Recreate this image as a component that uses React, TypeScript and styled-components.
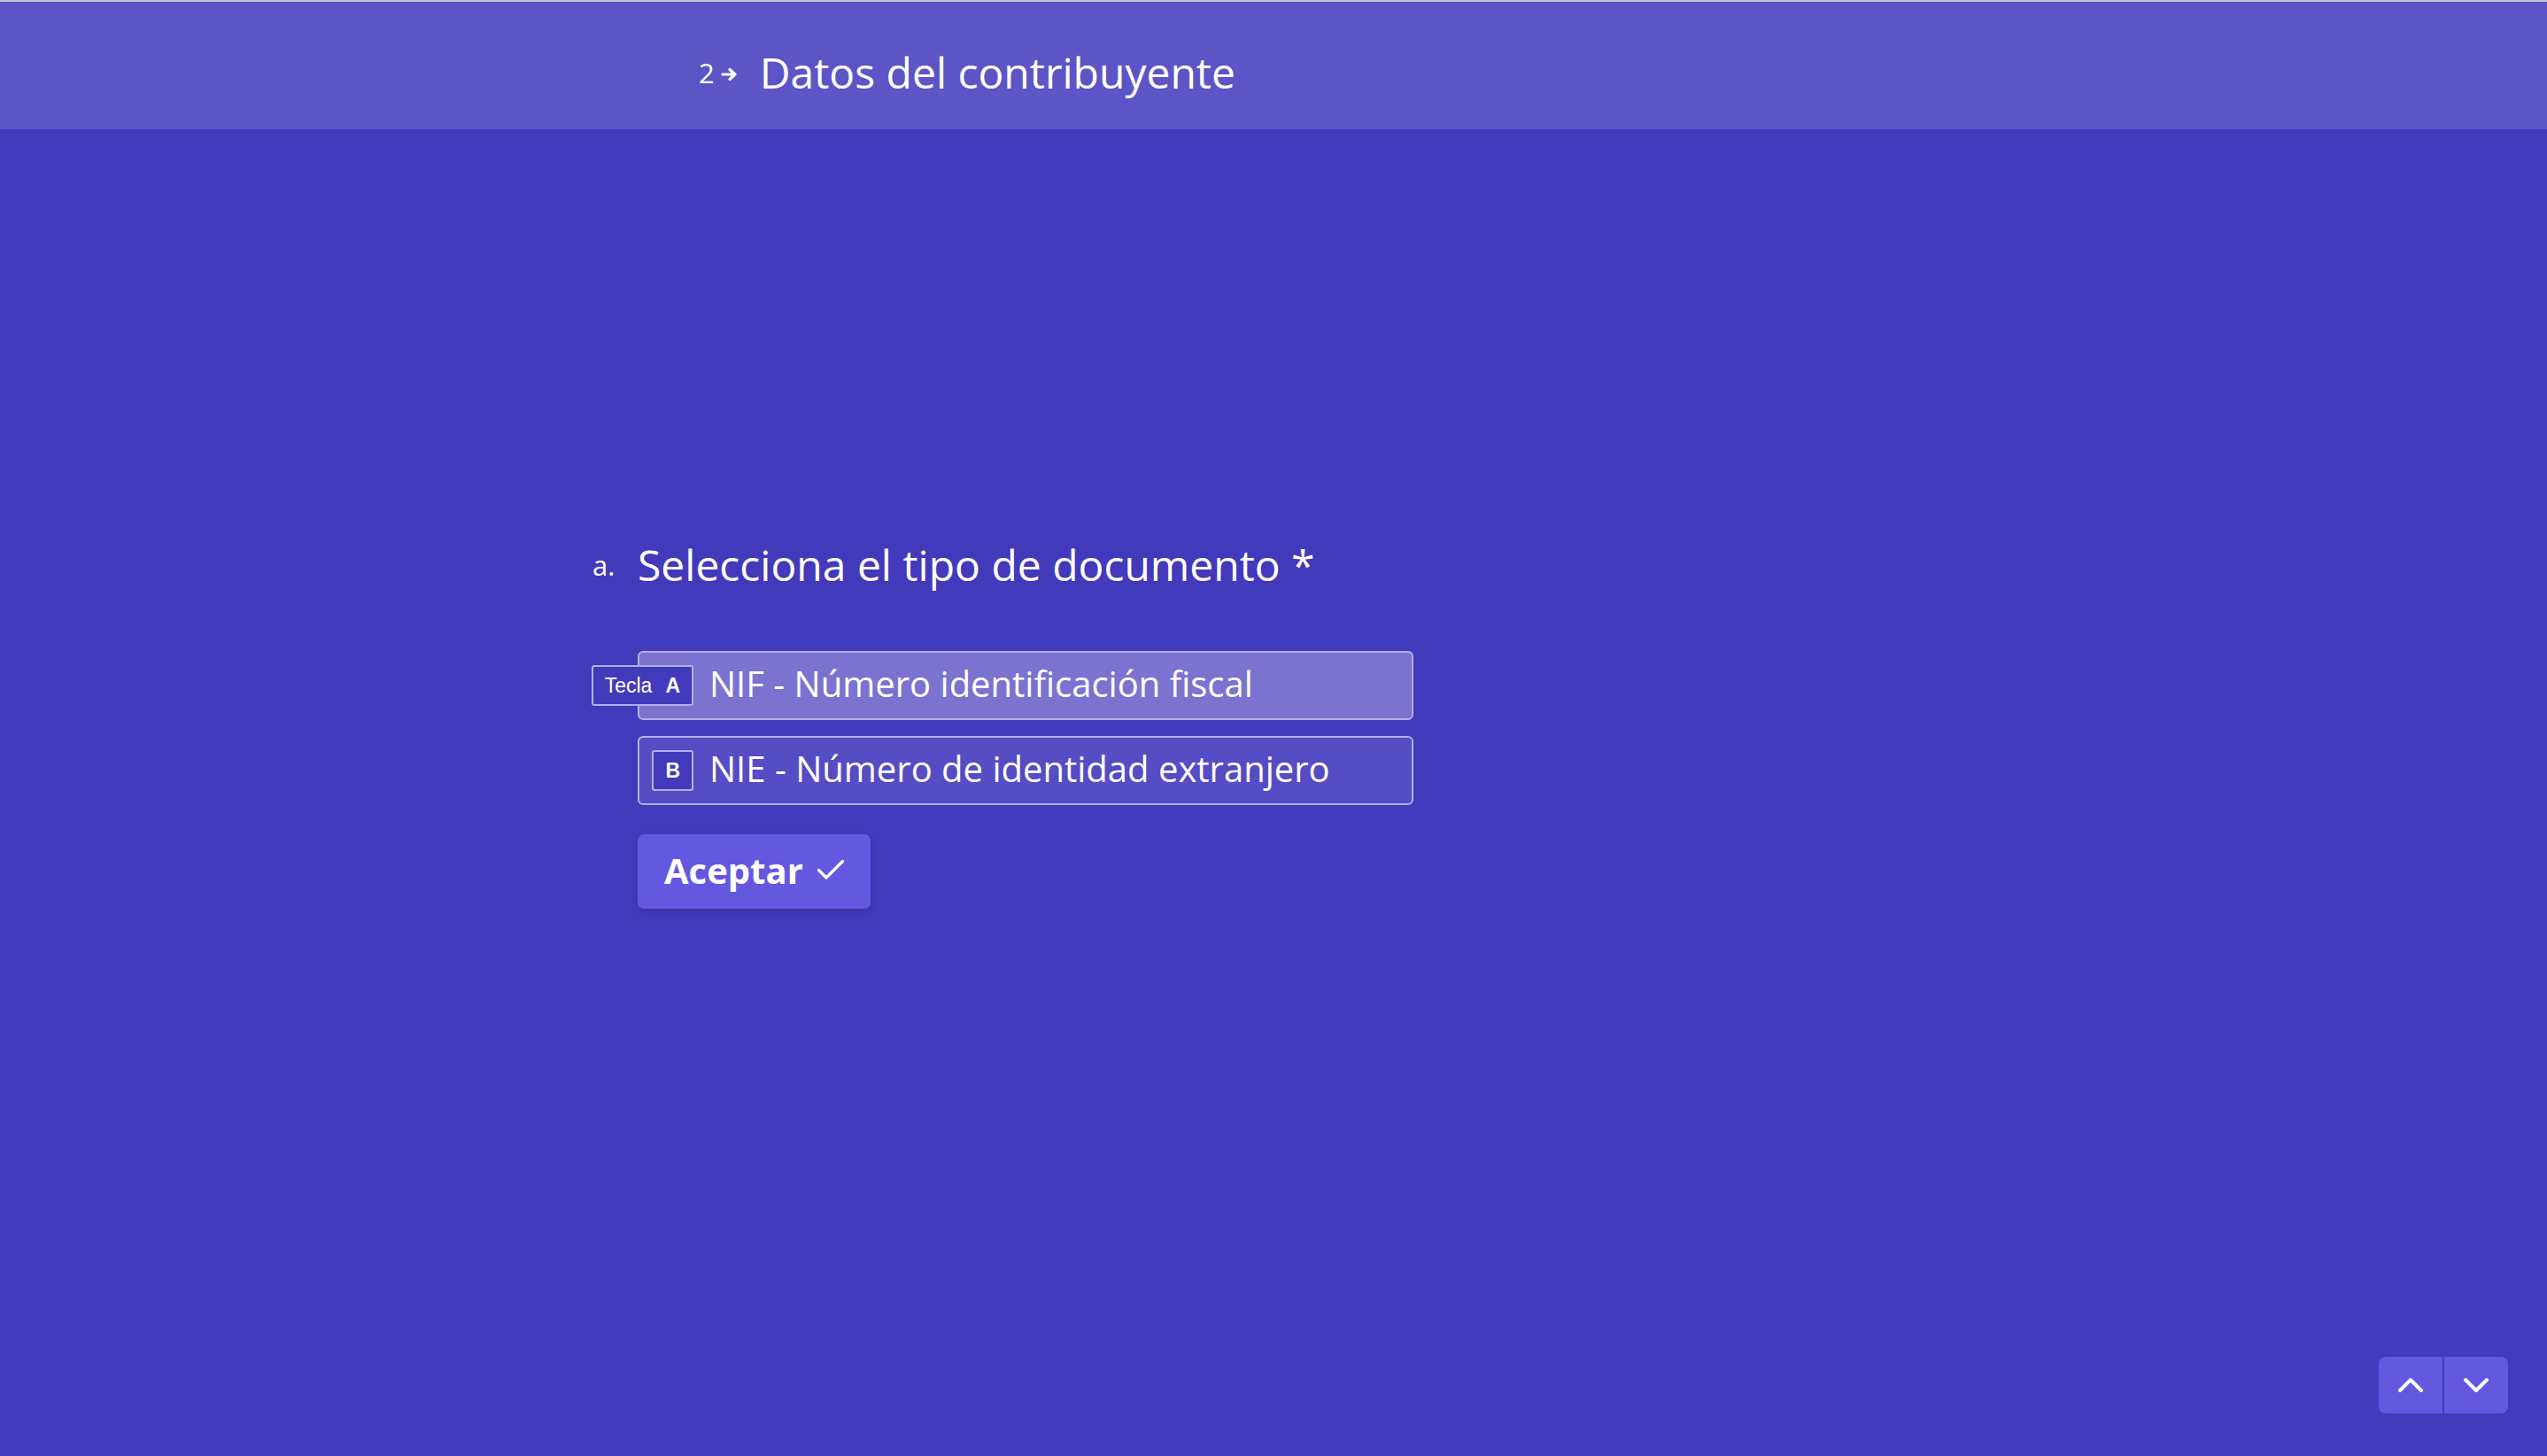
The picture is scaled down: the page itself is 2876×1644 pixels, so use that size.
import React from "react";
import styled, { createGlobalStyle } from "styled-components";

const GlobalStyle = createGlobalStyle`
  html, body {
    margin: 0;
    padding: 0;
    background: #4339bb;
    font-family: "Open Sans", "Noto Sans", sans-serif;
    color: #ffffff;
  }
`;

const Page = styled.div`
  min-height: 100vh;
  background: #4339bb;
  display: flex;
  flex-direction: column;
`;

const Header = styled.header`
  height: 146px;
  box-sizing: border-box;
  border-top: 2px solid #c9c8d6;
  background: #5d55c5;
  display: flex;
  align-items: center;
  padding-left: 789px;
  padding-top: 16px;
`;

const Step = styled.span`
  display: flex;
  align-items: center;
  font-size: 31px;
  margin-right: 24px;

  & svg {
    margin-left: 7px;
    margin-top: 3px;
  }
`;

const SectionTitle = styled.h1`
  margin: 0;
  font-size: 48px;
  font-weight: 400;
  line-height: 60px;
`;

const Main = styled.main`
  padding: 462px 0 0 720px;
`;

const Question = styled.div`
  display: flex;
  align-items: center;
  margin-left: -51px;
`;

const Number = styled.span`
  width: 51px;
  font-size: 31px;
`;

const QuestionText = styled.h2`
  margin: 0;
  font-size: 48px;
  font-weight: 400;
  line-height: 60px;
`;

const Options = styled.div`
  display: flex;
  flex-direction: column;
  gap: 18px;
  margin-top: 67px;
  width: 876px;
`;

const Option = styled.div<{ $active?: boolean }>`
  height: 78px;
  box-sizing: border-box;
  border: 2px solid #b4afe7;
  border-radius: 6px;
  background: ${(p) => (p.$active ? "#7b73cf" : "#564cc4")};
  display: flex;
  align-items: center;
  padding-left: 15px;
  gap: 18px;
`;

const KeySlot = styled.div`
  width: 46px;
  display: flex;
  justify-content: flex-end;
`;

const Key = styled.span`
  height: 46px;
  min-width: 46px;
  box-sizing: border-box;
  border: 2px solid #b4afe7;
  border-radius: 3px;
  background: #4339bb;
  display: flex;
  align-items: center;
  justify-content: center;
  gap: 15px;
  padding: 0 13px;
  font-family: "Liberation Sans", Arial, sans-serif;
  font-size: 23px;
  white-space: nowrap;
  flex-shrink: 0;

  & b {
    font-weight: 700;
  }
`;

const OptionLabel = styled.span`
  font-size: 40px;
  line-height: 1;
  padding-bottom: 4px;
`;

const SubmitButton = styled.button`
  margin-top: 33px;
  height: 84px;
  width: 263px;
  border: none;
  border-radius: 7px;
  background: #6558e0;
  color: #ffffff;
  font-family: "Open Sans", "Noto Sans", sans-serif;
  font-weight: 700;
  font-size: 40px;
  display: flex;
  align-items: center;
  gap: 15px;
  padding: 0 0 4px 30px;
  box-shadow: 0 3px 12px rgba(0, 0, 0, 0.12);
  cursor: pointer;
`;

const NavGroup = styled.div`
  position: fixed;
  right: 44px;
  bottom: 48px;
  display: flex;
  gap: 2px;
`;

const NavButton = styled.button<{ $side: "left" | "right" }>`
  width: 72px;
  height: 64px;
  border: none;
  background: #6558e0;
  display: flex;
  align-items: center;
  justify-content: center;
  border-radius: ${(p) => (p.$side === "left" ? "8px 0 0 8px" : "0 8px 8px 0")};
  cursor: pointer;
`;

const ArrowRight = () => (
  <svg width="20" height="16" viewBox="0 0 20 16" fill="none">
    <path d="M2 8h14M10 2.5l6 5.5-6 5.5" stroke="#fff" strokeWidth="3.2" strokeLinecap="round" strokeLinejoin="round" />
  </svg>
);

const Check = () => (
  <svg width="32" height="24" viewBox="0 0 32 24" fill="none">
    <path d="M2.5 12.5l8.5 8.5L29.5 2.5" stroke="#fff" strokeWidth="3.2" strokeLinecap="round" strokeLinejoin="round" />
  </svg>
);

const Chevron = ({ up }: { up?: boolean }) => (
  <svg width="30" height="20" viewBox="0 0 30 20" fill="none">
    <path
      d={up ? "M3 16L15 4l12 12" : "M3 4l12 12L27 4"}
      stroke="#fff"
      strokeWidth="4"
      strokeLinecap="round"
      strokeLinejoin="round"
    />
  </svg>
);

const options = [
  { key: "A", label: "NIF - Número identificación fiscal", active: true },
  { key: "B", label: "NIE - Número de identidad extranjero", active: false },
];

export default function App() {
  return (
    <Page>
      <GlobalStyle />
      <Header>
        <Step>
          2
          <ArrowRight />
        </Step>
        <SectionTitle>Datos del contribuyente</SectionTitle>
      </Header>
      <Main>
        <Question>
          <Number>a.</Number>
          <QuestionText>Selecciona el tipo de documento *</QuestionText>
        </Question>
        <Options>
          {options.map((o) => (
            <Option key={o.key} $active={o.active}>
              <KeySlot>
                <Key>
                  {o.active && <span>Tecla</span>}
                  <b>{o.key}</b>
                </Key>
              </KeySlot>
              <OptionLabel>{o.label}</OptionLabel>
            </Option>
          ))}
        </Options>
        <SubmitButton>
          Aceptar
          <Check />
        </SubmitButton>
      </Main>
      <NavGroup>
        <NavButton $side="left">
          <Chevron up />
        </NavButton>
        <NavButton $side="right">
          <Chevron />
        </NavButton>
      </NavGroup>
    </Page>
  );
}
